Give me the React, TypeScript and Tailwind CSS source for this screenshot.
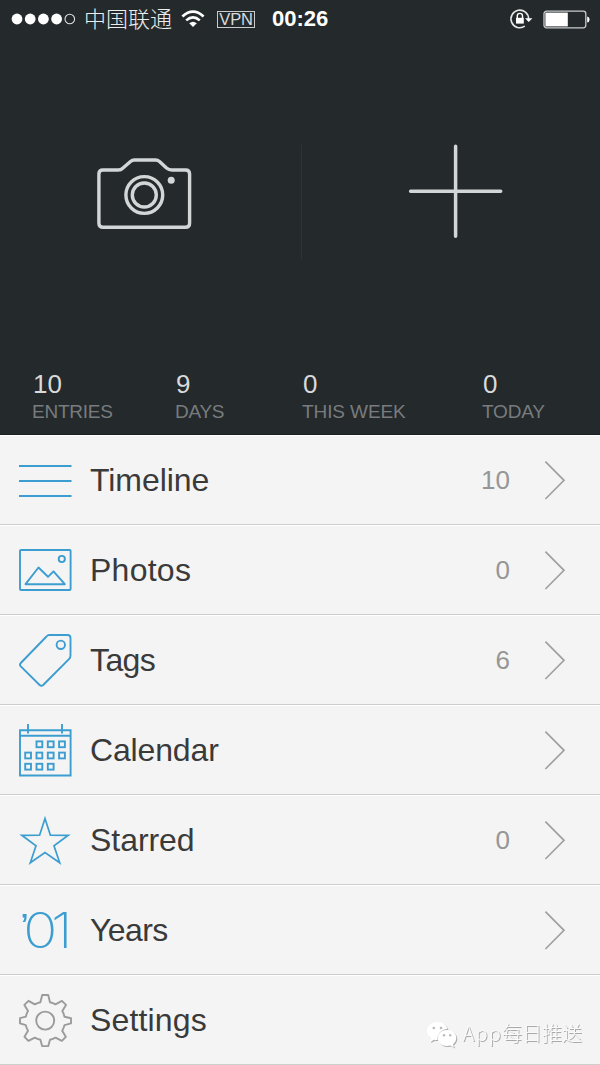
import type { ReactNode } from 'react';
import { clsx } from 'clsx';

interface MenuItem {
  label: string;
  icon: ReactNode;
  count?: number;
  arrow?: boolean;
  tracking: string;
}

const stats = [
  { value: 10, label: 'ENTRIES', tracking: 'tracking-[-0.25px]' },
  { value: 9, label: 'DAYS', tracking: 'tracking-[-0.3px]' },
  { value: 0, label: 'THIS WEEK', tracking: 'tracking-[-0.1px]' },
  { value: 0, label: 'TODAY', tracking: 'tracking-[-0.2px]' },
];

function LineIcon({ children, className }: { children: ReactNode; className?: string }) {
  return (
    <svg
      viewBox="0 0 54 54"
      fill="none"
      stroke="currentColor"
      strokeWidth="1.9"
      className={clsx('h-[54px] w-[54px] shrink-0', className || 'text-[#3c9dd0]')}
    >
      {children}
    </svg>
  );
}

// filled cells of the calendar grid, [column, row]
const calendarCells = [
  [1, 0], [2, 0], [3, 0],
  [0, 1], [1, 1], [2, 1], [3, 1],
  [0, 2], [1, 2], [2, 2],
];

const items: MenuItem[] = [
  {
    label: 'Timeline',
    count: 10,
    arrow: true,
    tracking: 'tracking-[-0.05px]',
    icon: (
      <LineIcon>
        <path d="M1 13H53.5M1 28H53.5M1 43H53.5" />
      </LineIcon>
    ),
  },
  {
    label: 'Photos',
    count: 0,
    arrow: true,
    tracking: 'tracking-[0.25px]',
    icon: (
      <LineIcon>
        <rect x="2" y="7" width="50.6" height="40" rx="1" />
        <circle cx="43.8" cy="16" r="3.1" />
        <path d="M7.5 41.2L20.5 24.5L30 33.8L35.5 28.3L46.8 41.2Z" strokeLinejoin="round" />
      </LineIcon>
    ),
  },
  {
    label: 'Tags',
    count: 6,
    arrow: true,
    tracking: 'tracking-[-0.6px]',
    icon: (
      <LineIcon>
        <path
          d="M31 2H49.5Q52.5 2 52.5 5V22.5Q52.5 24.5 51.2 25.8L25.2 52Q23.4 53.5 21.6 52L2.8 33.4Q1.2 31.7 2.8 30L28.5 3.5Q29.8 2 31 2Z"
          strokeLinejoin="round"
        />
        <circle cx="42.8" cy="11.8" r="4.2" />
      </LineIcon>
    ),
  },
  {
    label: 'Calendar',
    arrow: true,
    tracking: 'tracking-[-0.15px]',
    icon: (
      <LineIcon>
        <path d="M2 7.2H52.6V52.5H2ZM2 12.7H52.6M10 1V10.5M44 1V10.5" />
        {calendarCells.map(([col, row]) => (
          <rect
            key={`${col}-${row}`}
            x={7.2 + col * 11.3}
            y={18.4 + row * 11.2}
            width="5.8"
            height="5.8"
          />
        ))}
      </LineIcon>
    ),
  },
  {
    label: 'Starred',
    count: 0,
    arrow: true,
    tracking: 'tracking-[-0.05px]',
    icon: (
      <LineIcon>
        <path
          d="M27 5.6L32.4 22.2L50.2 22.3L36 32.8L41.7 49.8L27 39.6L12.3 49.8L18 32.8L3.8 22.3L21.6 22.2Z"
          strokeWidth="1.7"
        />
      </LineIcon>
    ),
  },
  {
    label: 'Years',
    arrow: true,
    tracking: 'tracking-[-0.6px]',
    icon: (
      <div className="flex h-[54px] w-[54px] shrink-0 items-center pt-[2px] pl-[2px] text-[#3c9dd0]">
        <span className="origin-left scale-x-114 font-[Inter] text-[49.5px] leading-none font-extralight tracking-[-5.6px] whitespace-nowrap">
          <span className="align-[8px] font-['Liberation_Sans'] text-[36px] leading-none tracking-[-5.2px]">’</span>
          01
        </span>
      </div>
    ),
  },
  {
    label: 'Settings',
    tracking: 'tracking-[0.15px]',
    icon: (
      <LineIcon className="text-[#9b9b9b]">
        <path
          d="M24.2 2H30.2L32 9.2Q35 9.9 37.5 11.3L43.9 7.8L48 11.9L44.3 18.1Q45.9 20.7 46.5 23.7L53 25.2V30.4L46.5 32.1Q45.8 35 44.2 37.7L47.8 43.8L43.9 47.9L37.5 44.6Q35 46.1 32 46.8L30.2 53.2H24.2L22.4 46.8Q19.4 46.1 16.8 44.6L10.4 47.9L6.5 43.8L10 37.7Q8.4 35 7.8 32.1L2 30.4V25.2L7.8 23.7Q8.4 20.7 10 18.1L6.4 11.9L10.5 7.8L16.8 11.3Q19.4 9.9 22.4 9.2Z"
          strokeLinejoin="round"
        />
        <circle cx="27.2" cy="27.6" r="9" />
      </LineIcon>
    ),
  },
];

function StatusBar() {
  return (
    <div className="flex h-[38px] items-center pr-[10px] pl-[11px] text-white">
      <svg viewBox="0 0 65 12" className="h-[12px] w-[65px]">
        {[6, 19.2, 32.4, 45.6].map((x) => (
          <circle key={x} cx={x} cy="6" r="5.4" fill="#fff" />
        ))}
        <circle cx="58.8" cy="6" r="4.8" fill="none" stroke="#dfe1e2" strokeWidth="1.1" />
      </svg>
      <span className="ml-[8px] pb-[4px] font-['Noto_Sans_CJK_SC',sans-serif] text-[22px] leading-none font-light text-[#eceeee]">
        中国联通
      </span>
      <svg viewBox="0 0 24 18" fill="none" stroke="#fff" className="ml-[9px] h-[18px] w-[24px]">
        <path d="M1.4 6.5Q12 -3.2 22.6 6.5" strokeWidth="2.8" />
        <path d="M5.2 10.4Q12 4.3 18.8 10.4" strokeWidth="2.6" />
        <path d="M12 17L8.2 13.2Q12 10.2 15.8 13.2Z" fill="#fff" stroke="none" />
      </svg>
      <span className="ml-[12px] flex h-[17px] w-[38px] items-center justify-center border border-[#c9cccd] pt-px text-[16.5px] leading-none tracking-[-0.2px] text-[#d9dbdc]">
        VPN
      </span>
      <span className="ml-[17px] text-[22px] leading-none font-bold">00:26</span>
      <svg viewBox="0 0 24 22" fill="none" className="ml-auto h-[22px] w-[24px]">
        <path d="M19.6 11A8.8 8.8 0 1 0 15.8 18.2" stroke="#e4e6e6" strokeWidth="1.6" />
        <path d="M16 10.2H23.4L19.7 14Z" fill="#fff" />
        <path d="M8.3 10V8A2.6 2.6 0 0 1 13.5 8V10" stroke="#fff" strokeWidth="1.4" />
        <rect x="7" y="9.8" width="7.8" height="5.8" fill="#fff" />
      </svg>
      <svg viewBox="0 0 47 19" fill="none" className="ml-[10px] h-[19px] w-[47px]">
        <rect x="1" y="1.2" width="41.8" height="16.6" rx="2.5" stroke="#c9cbcc" strokeWidth="1.3" />
        <rect x="2.4" y="2.6" width="22.4" height="13.8" fill="#fff" />
        <path d="M44.2 6.4Q46.6 7 46.6 9.5T44.2 12.6Z" fill="#fff" />
      </svg>
    </div>
  );
}

function Header() {
  return (
    <header className="flex h-[435px] flex-col border-b border-[#1b1f21] bg-[#24292c]">
      <StatusBar />
      <div className="flex h-[330px] pt-[107px]">
        <div className="flex h-[115px] w-[302px] border-r border-[#2e3336] pt-[12px] pl-[96px]">
          <svg viewBox="0 0 97 74" fill="none" stroke="#d3d6d7" strokeWidth="3.4" className="h-[74px] w-[97px]">
            <path
              d="M7 13H22Q25 13 27 11L34.5 4.5Q36.2 3 38.5 3H59.5Q61.8 3 63.5 4.5L70.5 11Q72.8 13 76 13H89.5Q93.6 13 93.6 17V66.2Q93.6 70.3 89.5 70.3H7Q2.9 70.3 2.9 66.2V17Q2.9 13 7 13Z"
              strokeLinejoin="round"
            />
            <circle cx="48.3" cy="38" r="18.4" />
            <circle cx="48.3" cy="38" r="12" />
            <circle cx="75.2" cy="23.2" r="3.5" fill="#d3d6d7" stroke="none" />
          </svg>
        </div>
        <div className="pl-[106px]">
          <svg
            viewBox="0 0 96 94"
            stroke="#d3d6d7"
            strokeWidth="3.5"
            strokeLinecap="round"
            className="h-[94px] w-[96px] overflow-visible"
          >
            <path d="M47.6 1.2V91.2M2.6 46.2H92.7" />
          </svg>
        </div>
      </div>
      <div className="grid grid-cols-[143px_127px_180px_1fr] pl-[32px]">
        {stats.map((stat) => (
          <div key={stat.label}>
            <div className="h-[33px] pl-px text-[26px] leading-[32px] text-[#d8dadb]">{stat.value}</div>
            <div className={clsx('text-[19px] leading-[22px] text-[#787c7e]', stat.tracking)}>{stat.label}</div>
          </div>
        ))}
      </div>
    </header>
  );
}

function MenuRow({ item }: { item: MenuItem }) {
  return (
    <li className="flex h-[90px] items-center border-t border-b border-t-white border-b-[#cdcdcd] bg-[#f4f4f4] pr-[34px] pl-[18px]">
      {item.icon}
      <span className={clsx('ml-[18px] text-[32px] leading-[40px] text-[#3a3a3a]', item.tracking)}>{item.label}</span>
      {item.count !== undefined && (
        <span className="ml-auto pb-px text-[26px] leading-none text-[#969696]">{item.count}</span>
      )}
      {item.arrow && (
        <svg
          viewBox="0 0 22 40"
          fill="none"
          stroke="#a0a0a0"
          strokeWidth="1.7"
          className={clsx('h-[40px] w-[22px]', item.count !== undefined ? 'ml-[34px]' : 'ml-auto')}
        >
          <path d="M1.4 1.6L20 20.3L1.4 39" />
        </svg>
      )}
    </li>
  );
}

function Watermark() {
  return (
    <div className="absolute right-[18px] bottom-[17px] flex items-center drop-shadow-[1px_1px_0.5px_rgba(0,0,0,0.3)]">
      <svg viewBox="0 0 32 28" className="mr-[4px] h-[28px] w-[32px]">
        <path
          d="M11.5 2C5.5 2 1 6 1 11c0 3 1.5 5.5 4 7.2L4 22l4.2-2.3c1 .3 2.2.4 3.3.4C11 14 15.5 9 21.5 9C20.3 4.8 16.5 2 11.5 2Z"
          fill="#fff"
        />
        <path
          d="M21 10C15.8 10 11.8 13.5 11.8 18S15.8 26 21 26c1.2 0 2.3-.2 3.3-.5L28 27.5l-1-3.2c2.1-1.5 3.3-3.7 3.3-6.3C30.3 13.5 26.2 10 21 10Z"
          fill="#fff"
        />
        <g fill="#b9b9b9">
          <circle cx="7.8" cy="8" r="1.3" />
          <circle cx="15" cy="8" r="1.3" />
          <circle cx="18" cy="15.3" r="1.2" />
          <circle cx="24.2" cy="15.3" r="1.2" />
        </g>
      </svg>
      <span className="pb-px font-['Noto_Sans_CJK_SC',sans-serif] text-[20px] leading-[28px] font-light text-[#fafafa]">
        <span className="tracking-[1.2px]">App</span>每日推送
      </span>
    </div>
  );
}

export default function App() {
  return (
    <div className="relative h-[1065px] w-[600px] overflow-hidden bg-[#f4f4f4] font-['Liberation_Sans',Arial,sans-serif]">
      <Header />
      <ul>
        {items.map((item) => (
          <MenuRow key={item.label} item={item} />
        ))}
      </ul>
      <Watermark />
    </div>
  );
}
